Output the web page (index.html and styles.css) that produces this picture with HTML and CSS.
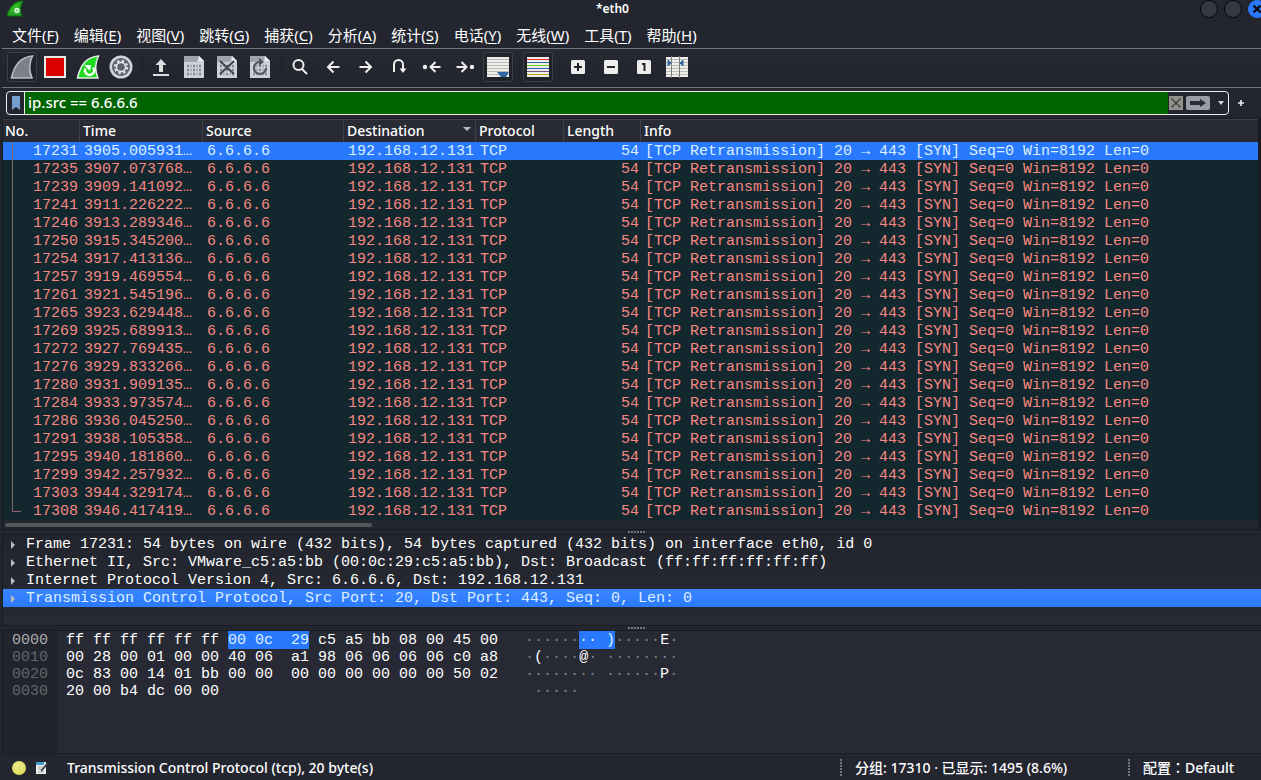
FILE: index.html
```html
<!DOCTYPE html>
<html lang="zh-CN">
<head>
<meta charset="utf-8">
<title>*eth0</title>
<link rel="stylesheet" href="styles.css">
</head>
<body>
<header class="titlebar">
  <svg class="app-icon" viewBox="0 0 18 18"><path d="M1 16C3 8 7 1 17 1c-3 5-3 10-1 15z" fill="#27a327" stroke="#0b6d0b"/><path d="M4 12C6 7 9 4 14 3c-2 4-2 6-1 9z" fill="#35bd25"/><circle cx="11" cy="10.500" r="2" fill="#7fd678" stroke="#d9f7d5" stroke-width="1.400"/></svg>
  <h1 class="window-title">*eth0</h1>
  <div class="window-buttons">
    <button class="win" aria-label="Minimize"></button>
    <button class="win" aria-label="Maximize"></button>
    <button class="win win-close" aria-label="Close"><svg viewBox="0 0 10 10"><path d="M1.500 1.500l7 7m0-7l-7 7" stroke="#0b0d12" stroke-width="2.400"/></svg></button>
  </div>
</header>
<nav class="menubar">
  <button>文件(<u>F</u>)</button>
  <button>编辑(<u>E</u>)</button>
  <button>视图(<u>V</u>)</button>
  <button>跳转(<u>G</u>)</button>
  <button>捕获(<u>C</u>)</button>
  <button>分析(<u>A</u>)</button>
  <button>统计(<u>S</u>)</button>
  <button>电话(<u>Y</u>)</button>
  <button>无线(<u>W</u>)</button>
  <button>工具(<u>T</u>)</button>
  <button>帮助(<u>H</u>)</button>
</nav>
<div class="toolbar">
  <button class="tool framed" aria-label="Start capture"><svg viewBox="0 0 24 24"><path d="M1.500 23C4 11 10 2 22.500 1c-3.500 7-3.500 15-.5 22z" fill="#7d808a" stroke="#b9bbc2" stroke-width="1.600"/></svg></button>
  <button class="tool" aria-label="Stop capture"><svg viewBox="0 0 24 24"><path d="M1 1h22v22H1z" fill="#e9e9e9"/><path d="M3 3h18v18H3z" fill="#dc0000"/></svg></button>
  <button class="tool" aria-label="Restart capture"><svg viewBox="0 0 24 24"><path d="M1.500 23C4 11 10 2 22.500 1c-3.500 7-3.500 15-.5 22z" fill="#1bd81b" stroke="#e6eee6" stroke-width="1.500"/><path d="M9.500 13.500a4.500 4.500 0 1 0 7.500-1" fill="none" stroke="#fff" stroke-width="2.400"/><path d="M8 10h7l-1 6z" fill="#fff"/></svg></button>
  <button class="tool" aria-label="Capture options"><svg viewBox="0 0 24 24"><circle cx="12" cy="12" r="11.500" fill="#d2d4dc"/><circle cx="12" cy="12" r="9" fill="#5f626c"/><circle cx="12" cy="12" r="6.200" fill="none" stroke="#e4e5ea" stroke-width="2" stroke-dasharray="2.400 2.470"/><circle cx="12" cy="12" r="4.600" fill="#5f626c" stroke="#e4e5ea" stroke-width="1.600"/></svg></button>
  <span class="sep"></span>
  <button class="tool" aria-label="Open"><svg viewBox="0 0 24 24"><path d="M12 4l5.500 6H14v7h-4v-7H6.500z" fill="#dcdddf"/><path d="M4 19h16v2H4z" fill="#dcdddf"/></svg></button>
  <button class="tool" aria-label="Save"><svg viewBox="0 0 24 24"><use href="#sheet"/></svg></button>
  <button class="tool" aria-label="Close file"><svg viewBox="0 0 24 24"><use href="#sheet"/><path d="M5 6l14 13M19 6L5 19" stroke="#40434b" stroke-width="2"/></svg></button>
  <button class="tool" aria-label="Reload"><svg viewBox="0 0 24 24"><use href="#sheet"/><path d="M12 7a6 6 0 1 0 6 6" fill="none" stroke="#50535b" stroke-width="2.200"/><path d="M11 3l5 4-5 4z" fill="#50535b"/></svg></button>
  <span class="sep"></span>
  <button class="tool" aria-label="Find"><svg viewBox="0 0 24 24" class="line"><circle cx="10.500" cy="10" r="5"/><path d="M14 14l5 5"/></svg></button>
  <button class="tool" aria-label="Back"><svg viewBox="0 0 24 24" class="line"><path d="M18.500 12H7m5.500-5.500L7 12l5.500 5.500"/></svg></button>
  <button class="tool" aria-label="Forward"><svg viewBox="0 0 24 24" class="line"><path d="M5.500 12H17m-5.500-5.500L17 12l-5.500 5.500"/></svg></button>
  <button class="tool" aria-label="Go to packet"><svg viewBox="0 0 24 24" class="line"><path d="M7 17V9.500a4.500 4.500 0 0 1 9 0V15"/><path d="M12.500 13.500h7L16 18z" fill="#eeeeec" stroke="none"/></svg></button>
  <button class="tool" aria-label="First packet"><svg viewBox="0 0 24 24" class="line"><path d="M20.500 12H11m4.500-5L10.500 12l5 5"/><circle cx="5" cy="12" r="2.200" fill="#eeeeec" stroke="none"/></svg></button>
  <button class="tool" aria-label="Last packet"><svg viewBox="0 0 24 24" class="line"><path d="M3.500 12H13m-4.500-5l5 5-5 5"/><circle cx="19" cy="12" r="2.200" fill="#eeeeec" stroke="none"/></svg></button>
  <button class="tool framed" aria-label="Auto scroll"><svg viewBox="0 0 24 24"><path d="M1 2h22v20H1z" fill="#eeeeec"/><path d="M1 4.500h22M1 7.500h22M1 10.500h22M1 13.500h22M1 16.500h22M1 19.500h22" stroke="#b9bbb6"/><path d="M11 17h12l-3 5h-5z" fill="#3465a4"/></svg></button>
  <span class="sep"></span>
  <button class="tool framed" aria-label="Colorize"><svg viewBox="0 0 24 24"><path d="M1 2h22v20H1z" fill="#eeeeec"/><path d="M1 4.500h22" stroke="#ef2929"/><path d="M1 7.500h22" stroke="#3465a4"/><path d="M1 10.500h22" stroke="#73d216"/><path d="M1 13.500h22" stroke="#3465a4"/><path d="M1 16.500h22" stroke="#75507b"/><path d="M1 19.500h22" stroke="#c4a000"/></svg></button>
  <span class="sep"></span>
  <button class="tool" aria-label="Zoom in"><svg viewBox="0 0 24 24"><use href="#key"/><path d="M8 12h8M12 8v8" stroke="#23262f" stroke-width="2"/></svg></button>
  <button class="tool" aria-label="Zoom out"><svg viewBox="0 0 24 24"><use href="#key"/><path d="M8 12h8" stroke="#23262f" stroke-width="2"/></svg></button>
  <button class="tool" aria-label="Normal size"><svg viewBox="0 0 24 24"><use href="#key"/><path d="M10 9h2.500v7" fill="none" stroke="#23262f" stroke-width="2"/></svg></button>
  <button class="tool" aria-label="Resize columns"><svg viewBox="0 0 24 24"><path d="M1 2h22v20H1z" fill="#eeeeec"/><path d="M1 4.500h22M1 7.500h22M1 10.500h22M1 13.500h22M1 16.500h22M1 19.500h22" stroke="#babdb6"/><path d="M6.500 1v22M14.500 1v22" stroke="#7c7e7a"/><path d="M3 5l3 3-3 3zM18 5l-3 3 3 3z" fill="#3465a4" stroke="#3465a4"/></svg></button>
</div>
<form class="filterbar">
  <div class="filter">
    <button type="button" class="bookmark" aria-label="Bookmark"><svg viewBox="0 0 8 14"><path d="M0 0h8v14l-4-3-4 3z" fill="#729fcf"/></svg></button>
    <input class="filter-input" type="text" aria-label="Display filter" value="ip.src == 6.6.6.6">
    <button type="button" class="clear" aria-label="Clear"><svg viewBox="0 0 14 14"><path d="M2.500 2.500l9 9m0-9l-9 9" stroke="#3c3e3c" stroke-width="1.400"/></svg></button>
    <button type="button" class="apply" aria-label="Apply"><svg viewBox="0 0 24 14"><path d="M4 5h10V3l6 4-6 4V9H4z" fill="#2b2d33"/></svg></button>
    <button type="button" class="recent" aria-label="Recent"><svg viewBox="0 0 6 4"><path d="M0 0h6L3 4z" fill="#d6d7d9"/></svg></button>
  </div>
  <button type="button" class="add" aria-label="Add filter"><svg viewBox="0 0 8 8"><path d="M1 4h6M4 1v6" stroke="#eeeeec" stroke-width="1.600"/></svg></button>
</form>
<main class="panes">
  <section class="packets">
    <table class="packet-table">
      <colgroup><col class="c-no"><col class="c-time"><col class="c-src"><col class="c-dst"><col class="c-proto"><col class="c-len"><col></colgroup>
      <thead><tr><th>No.</th><th>Time</th><th>Source</th><th class="sorted">Destination</th><th>Protocol</th><th>Length</th><th>Info</th></tr></thead>
      <tbody>
        <tr class="selected"><td>17231</td><td>3905.005931…</td><td>6.6.6.6</td><td>192.168.12.131</td><td>TCP</td><td>54</td><td>[TCP Retransmission] 20 → 443 [SYN] Seq=0 Win=8192 Len=0</td></tr>
        <tr><td>17235</td><td>3907.073768…</td><td>6.6.6.6</td><td>192.168.12.131</td><td>TCP</td><td>54</td><td>[TCP Retransmission] 20 → 443 [SYN] Seq=0 Win=8192 Len=0</td></tr>
        <tr><td>17239</td><td>3909.141092…</td><td>6.6.6.6</td><td>192.168.12.131</td><td>TCP</td><td>54</td><td>[TCP Retransmission] 20 → 443 [SYN] Seq=0 Win=8192 Len=0</td></tr>
        <tr><td>17241</td><td>3911.226222…</td><td>6.6.6.6</td><td>192.168.12.131</td><td>TCP</td><td>54</td><td>[TCP Retransmission] 20 → 443 [SYN] Seq=0 Win=8192 Len=0</td></tr>
        <tr><td>17246</td><td>3913.289346…</td><td>6.6.6.6</td><td>192.168.12.131</td><td>TCP</td><td>54</td><td>[TCP Retransmission] 20 → 443 [SYN] Seq=0 Win=8192 Len=0</td></tr>
        <tr><td>17250</td><td>3915.345200…</td><td>6.6.6.6</td><td>192.168.12.131</td><td>TCP</td><td>54</td><td>[TCP Retransmission] 20 → 443 [SYN] Seq=0 Win=8192 Len=0</td></tr>
        <tr><td>17254</td><td>3917.413136…</td><td>6.6.6.6</td><td>192.168.12.131</td><td>TCP</td><td>54</td><td>[TCP Retransmission] 20 → 443 [SYN] Seq=0 Win=8192 Len=0</td></tr>
        <tr><td>17257</td><td>3919.469554…</td><td>6.6.6.6</td><td>192.168.12.131</td><td>TCP</td><td>54</td><td>[TCP Retransmission] 20 → 443 [SYN] Seq=0 Win=8192 Len=0</td></tr>
        <tr><td>17261</td><td>3921.545196…</td><td>6.6.6.6</td><td>192.168.12.131</td><td>TCP</td><td>54</td><td>[TCP Retransmission] 20 → 443 [SYN] Seq=0 Win=8192 Len=0</td></tr>
        <tr><td>17265</td><td>3923.629448…</td><td>6.6.6.6</td><td>192.168.12.131</td><td>TCP</td><td>54</td><td>[TCP Retransmission] 20 → 443 [SYN] Seq=0 Win=8192 Len=0</td></tr>
        <tr><td>17269</td><td>3925.689913…</td><td>6.6.6.6</td><td>192.168.12.131</td><td>TCP</td><td>54</td><td>[TCP Retransmission] 20 → 443 [SYN] Seq=0 Win=8192 Len=0</td></tr>
        <tr><td>17272</td><td>3927.769435…</td><td>6.6.6.6</td><td>192.168.12.131</td><td>TCP</td><td>54</td><td>[TCP Retransmission] 20 → 443 [SYN] Seq=0 Win=8192 Len=0</td></tr>
        <tr><td>17276</td><td>3929.833266…</td><td>6.6.6.6</td><td>192.168.12.131</td><td>TCP</td><td>54</td><td>[TCP Retransmission] 20 → 443 [SYN] Seq=0 Win=8192 Len=0</td></tr>
        <tr><td>17280</td><td>3931.909135…</td><td>6.6.6.6</td><td>192.168.12.131</td><td>TCP</td><td>54</td><td>[TCP Retransmission] 20 → 443 [SYN] Seq=0 Win=8192 Len=0</td></tr>
        <tr><td>17284</td><td>3933.973574…</td><td>6.6.6.6</td><td>192.168.12.131</td><td>TCP</td><td>54</td><td>[TCP Retransmission] 20 → 443 [SYN] Seq=0 Win=8192 Len=0</td></tr>
        <tr><td>17286</td><td>3936.045250…</td><td>6.6.6.6</td><td>192.168.12.131</td><td>TCP</td><td>54</td><td>[TCP Retransmission] 20 → 443 [SYN] Seq=0 Win=8192 Len=0</td></tr>
        <tr><td>17291</td><td>3938.105358…</td><td>6.6.6.6</td><td>192.168.12.131</td><td>TCP</td><td>54</td><td>[TCP Retransmission] 20 → 443 [SYN] Seq=0 Win=8192 Len=0</td></tr>
        <tr><td>17295</td><td>3940.181860…</td><td>6.6.6.6</td><td>192.168.12.131</td><td>TCP</td><td>54</td><td>[TCP Retransmission] 20 → 443 [SYN] Seq=0 Win=8192 Len=0</td></tr>
        <tr><td>17299</td><td>3942.257932…</td><td>6.6.6.6</td><td>192.168.12.131</td><td>TCP</td><td>54</td><td>[TCP Retransmission] 20 → 443 [SYN] Seq=0 Win=8192 Len=0</td></tr>
        <tr><td>17303</td><td>3944.329174…</td><td>6.6.6.6</td><td>192.168.12.131</td><td>TCP</td><td>54</td><td>[TCP Retransmission] 20 → 443 [SYN] Seq=0 Win=8192 Len=0</td></tr>
        <tr class="last"><td>17308</td><td>3946.417419…</td><td>6.6.6.6</td><td>192.168.12.131</td><td>TCP</td><td>54</td><td>[TCP Retransmission] 20 → 443 [SYN] Seq=0 Win=8192 Len=0</td></tr>
      </tbody>
    </table>
    <div class="hscroll"><div class="thumb"></div></div>
  </section>
  <div class="splitter"><span class="dots"></span></div>
  <section class="details">
    <ul class="tree">
      <li>Frame 17231: 54 bytes on wire (432 bits), 54 bytes captured (432 bits) on interface eth0, id 0</li>
      <li>Ethernet II, Src: VMware_c5:a5:bb (00:0c:29:c5:a5:bb), Dst: Broadcast (ff:ff:ff:ff:ff:ff)</li>
      <li>Internet Protocol Version 4, Src: 6.6.6.6, Dst: 192.168.12.131</li>
      <li class="selected">Transmission Control Protocol, Src Port: 20, Dst Port: 443, Seq: 0, Len: 0</li>
    </ul>
  </section>
  <div class="splitter"><span class="dots"></span></div>
  <section class="hexview">
    <pre class="offsets"><b>0000</b>
0010
0020
0030</pre>
    <pre class="bytes">ff ff ff ff ff ff <mark>00 0c  29</mark> c5 a5 bb 08 00 45 00
00 28 00 01 00 00 40 06  a1 98 06 06 06 06 c0 a8
0c 83 00 14 01 bb 00 00  00 00 00 00 00 00 50 02
20 00 b4 dc 00 00</pre>
    <pre class="ascii">······<mark>·· )</mark>·····<b>E</b>·
·<b>(</b>····<b>@</b>· ········
········ ······<b>P</b>·
 ·····</pre>
  </section>
</main>
<footer class="statusbar">
  <button class="expert" aria-label="Expert info"></button>
  <button class="comment" aria-label="Capture comment"><svg viewBox="0 0 14 14"><path d="M1 1h10v12H1z" fill="#eceeec"/><path d="M1 1h8v3H1z" fill="#3f9fd0"/><path d="M3 6h5M3 8h4M3 11h6" stroke="#a5a8a5"/><path d="M5.500 9.500L12 1.500l1.500 1L7 10.500z" fill="#3b3d40"/></svg></button>
  <span class="status-main">Transmission Control Protocol (tcp), 20 byte(s)</span>
  <span class="status-packets">分组: 17310 · 已显示: 1495 (8.6%)</span>
  <span class="status-profile" lang="zh-TW">配置：Default</span>
</footer>
<svg class="defs" aria-hidden="true">
  <defs>
    <g id="sheet"><path d="M2 1h15l5 5v17H2z" fill="#cfd1d8"/><path d="M2 1h15l-2 6H2z" fill="#a1a4ad"/><path d="M17 1l5 5h-5z" fill="#eff0f3"/><path d="M5 11h14M5 15h14M5 19h14" stroke="#858892" stroke-width="2.600" stroke-dasharray="2 1.500 1 1.500"/></g>
    <g id="key"><rect x="5" y="5" width="14" height="14" rx="1.500" fill="#eeeeec"/></g>
  </defs>
</svg>
</body>
</html>
```
FILE: styles.css
```css
* { box-sizing: border-box; }
body {
  margin: 0;
  min-height: 100vh;
  display: flex;
  flex-direction: column;
  overflow-x: hidden;
  background: #23262f;
  color: #fff;
  font: 500 14px/20px "Noto Sans", "Noto Sans CJK SC", sans-serif;
}
button {
  margin: 0;
  padding: 0;
  border: 0;
  background: none;
  color: inherit;
  font: inherit;
}
svg { display: block; }
.defs { position: absolute; width: 0; height: 0; }

.titlebar {
  display: grid;
  grid-template-columns: 1fr auto 1fr;
  align-items: start;
  height: 19px;
  padding-left: 6px;
}
.app-icon { width: 18px; height: 18px; }
.window-title { margin: 0 42px 0 0; font-size: 12px; line-height: 18px; font-weight: 600; }
.window-buttons { display: flex; justify-content: flex-end; gap: 6px; margin-right: -5px; }
.win {
  display: grid;
  place-items: center;
  width: 18px;
  height: 18px;
  border: 1px solid #07080b;
  border-radius: 50%;
  background: #343841;
}
.win-close { background: #2879fe; border-color: #2879fe; }
.win-close svg { width: 10px; height: 10px; }

.menubar {
  display: flex;
  align-items: flex-start;
  gap: 15px;
  height: 30px;
  margin-left: 2px;
  padding: 6px 10px 0;
  border-bottom: 1px solid #74767c;
  font-size: 15px;
  font-weight: 400;
}
.menubar u { text-underline-offset: 2px; }

.toolbar {
  display: flex;
  align-items: center;
  gap: 3px;
  height: 39px;
  margin-left: 2px;
  padding: 0 0 2px 5px;
  border-bottom: 1px solid #74767c;
  background: linear-gradient(#262932, #21242c);
}
.tool {
  display: grid;
  place-items: center;
  width: 30px;
  height: 30px;
  border: 1px solid transparent;
  border-radius: 3px;
}
.tool svg { width: 24px; height: 24px; }
.framed { border-color: #3c3f48; background: #20232a; }
.line { fill: none; stroke: #eeeeec; stroke-width: 2; }
.sep { width: 4px; height: 22px; border-right: 1px solid #1d2027; }

.filterbar { display: flex; align-items: center; margin: 0; padding: 3px 0 3px 6px; }
.filter {
  display: flex;
  flex: 1;
  align-items: center;
  height: 24px;
  border: 1px solid #eeeeec;
  border-radius: 4px;
  overflow: hidden;
}
.bookmark { display: grid; place-items: center; width: 18px; height: 22px; border-right: 1px solid #eeeeec; }
.bookmark svg { width: 8px; height: 14px; }
.filter-input {
  flex: 1;
  min-width: 0;
  height: 22px;
  padding: 0 3px 2px;
  border: 0;
  background: #006400;
  color: #fff;
  font: 500 15px/20px "Noto Sans", sans-serif;
}
.clear { width: 14px; height: 14px; margin-left: 1px; background: #8f918a; }
.apply { width: 24px; height: 14px; margin-left: 3px; border-radius: 2px; background: #9a9da8; }
.recent { display: grid; place-items: center; width: 18px; padding-left: 4px; }
.recent svg { width: 6px; height: 4px; }
.add { display: grid; place-items: center; width: 24px; margin-right: 8px; }
.add svg { width: 8px; height: 8px; }

.panes { display: flex; flex: 1; flex-direction: column; margin-left: 2px; }
.packets { border: 1px solid #1a1c23; border-right-width: 3px; }
.packet-table {
  width: 100%;
  border-collapse: separate;
  border-spacing: 0;
  table-layout: fixed;
  font: 15px/17px "Liberation Mono", monospace;
  background: #12272e;
  color: #f78782;
  white-space: pre;
}
.c-no { width: 77px; }
.c-time { width: 123px; }
.c-src { width: 141px; }
.c-dst { width: 132px; }
.c-proto { width: 88px; }
.c-len { width: 77px; }
th {
  height: 23px;
  padding: 0 3px;
  border-right: 1px solid #3e4149;
  border-top: 1px solid #3e4149;
  background: #282b34;
  color: #fff;
  font: 500 14px/22px "Noto Sans", sans-serif;
  text-align: left;
}
th:first-child { padding-left: 2px; }
th:last-child { border-right: 0; }
.sorted::after {
  content: "";
  float: right;
  margin: 7px 1px 0 0;
  border: 4px solid transparent;
  border-top-color: #b9bbbf;
  border-bottom: 0;
}
td { height: 18px; padding: 1px 0 0 4px; overflow: hidden; }
td:first-child, td:nth-child(6) { padding-right: 2px; text-align: right; }
td:first-child { background: linear-gradient(#8e6266, #8e6266) 9px 0 / 1px 100% no-repeat; }
.last td:first-child {
  background:
    linear-gradient(#8e6266, #8e6266) 9px 0 / 1px 10px no-repeat,
    linear-gradient(#8e6266, #8e6266) 9px 9px / 9px 1px no-repeat;
}
.packet-table .selected { background: #2879fe; color: #dcefff; }
.hscroll { height: 9px; padding: 3px 2px; background: #23262f; }
.thumb { width: 29.300%; height: 4px; border-radius: 2px; background: #55575b; }

.splitter { display: flex; justify-content: center; align-items: center; height: 4px; padding-left: 10px; }
.dots { width: 18px; height: 2px; background: repeating-linear-gradient(90deg, #75777d 0 2px, transparent 2px 3px); }
.details { min-height: 92px; border: 1px solid #1a1c23; border-right: 0; background: linear-gradient(#22252d, #272a34); }
.tree { margin: 0; padding: 0; list-style: none; font: 15px/17px "Liberation Mono", monospace; }
.tree li { display: flex; align-items: center; gap: 11px; padding: 1px 0 0 8px; white-space: pre; overflow: hidden; }
.tree li::before {
  content: "";
  border: 4px solid transparent;
  border-left: 4px solid #b9bbbf;
  border-right: 0;
}
.tree .selected { background: linear-gradient(#3b85ff, #2b7aff); color: #dcefff; }

.hexview {
  display: flex;
  flex: 1;
  border: 1px solid #1a1c23;
  border-right: 0;
  background: #272a34;
}
pre { margin: 0; padding-top: 1px; font: 15px/17px "Liberation Mono", monospace; }
.offsets { width: 54px; padding-left: 9px; background: #21242c; color: #62656b; }
.offsets b { color: #a9abaf; font-weight: 400; }
.bytes { padding-left: 9px; }
.ascii { padding-left: 27px; color: #7d8087; }
.ascii b { color: #fff; font-weight: 400; }
mark { padding-top: 1px; background: #2879fe; color: #dcefff; }

.statusbar { display: flex; align-items: center; height: 26px; padding: 1px 0 0 12px; white-space: pre; }
.expert { width: 14px; height: 14px; border-radius: 50%; background: radial-gradient(circle at 40% 35%, #ebe985, #d9d752); }
.comment { width: 14px; height: 14px; margin: 0 18px 0 9px; }
.status-main { flex: 1; }
.status-packets, .status-profile {
  padding-left: 16px;
  background: repeating-linear-gradient(#75777d 0 2px, transparent 2px 3px) 1px 1px / 2px 18px no-repeat;
}
.status-packets { width: 288px; }
.status-profile { width: 134px; font-family: "Noto Sans", "Noto Sans CJK TC", sans-serif; }
```
